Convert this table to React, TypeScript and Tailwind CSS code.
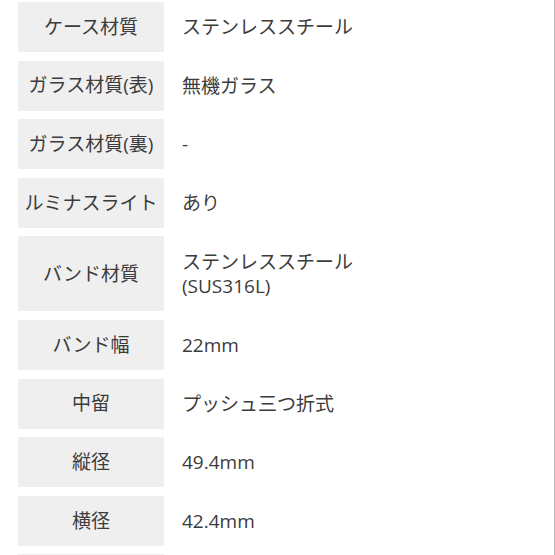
import React from "react";

const rows: { label: string; value: string[]; tall?: boolean }[] = [
  { label: "ケース材質", value: ["ステンレススチール"] },
  { label: "ガラス材質(表)", value: ["無機ガラス"] },
  { label: "ガラス材質(裏)", value: ["-"] },
  { label: "ルミナスライト", value: ["あり"] },
  { label: "バンド材質", value: ["ステンレススチール", "(SUS316L)"], tall: true },
  { label: "バンド幅", value: ["22mm"] },
  { label: "中留", value: ["プッシュ三つ折式"] },
  { label: "縦径", value: ["49.4mm"] },
  { label: "横径", value: ["42.4mm"] },
];

export default function App() {
  return (
    <div
      className="w-[555px] h-[555px] overflow-hidden bg-white border-r border-[#bdbdbd]"
      style={{ fontFamily: '"Open Sans", "Noto Sans CJK JP", sans-serif' }}
    >
      <div className="flex flex-col gap-[8.6px] pt-[2px] pl-[18px]">
        {rows.map((r, i) => (
          <div key={i} className="flex">
            <div
              className={`w-[146px] shrink-0 bg-[#efefef] flex items-center justify-center text-[19px] text-[#3c3c3c] ${
                r.tall ? "h-[75px]" : "h-[50px]"
              }`}
            >
              {r.label}
            </div>
            <div className="pl-[18px] flex flex-col justify-center text-[19px] leading-[24px] text-[#3c3c3c]">
              {r.value.map((v, j) => (
                <div key={j}>{v}</div>
              ))}
            </div>
          </div>
        ))}
        <div className="flex">
          <div className="w-[146px] h-[50px] bg-[#efefef]" />
        </div>
      </div>
    </div>
  );
}
